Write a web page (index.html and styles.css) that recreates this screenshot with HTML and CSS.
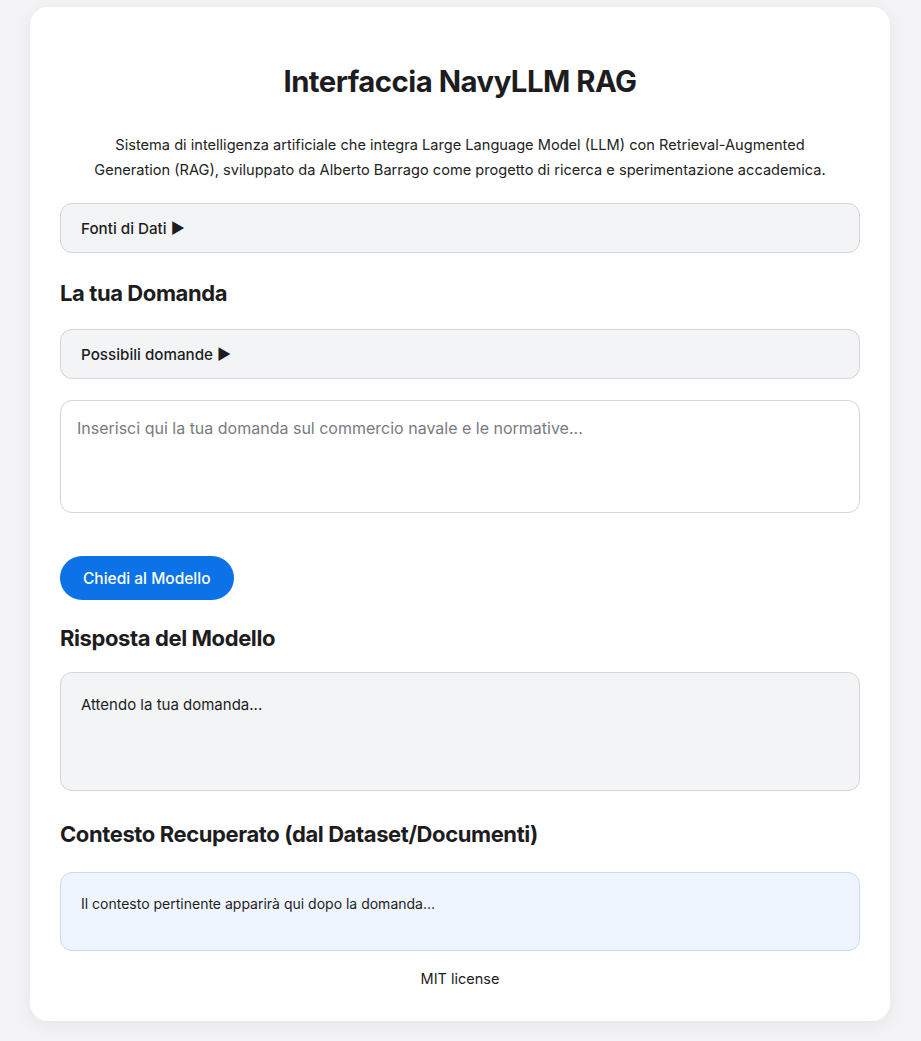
FILE: index.html
```html
<!DOCTYPE html>
<html lang="it">
<head>
<meta charset="utf-8">
<title>Interfaccia NavyLLM RAG</title>
<link rel="stylesheet" href="styles.css">
</head>
<body>
<main class="card">
  <h1 class="title">Interfaccia NavyLLM RAG</h1>
  <p class="desc">Sistema di intelligenza artificiale che integra Large Language Model (LLM) con Retrieval-Augmented Generation (RAG), sviluppato da Alberto Barrago come progetto di ricerca e sperimentazione accademica.</p>
  <div class="details details-sources">Fonti di Dati ▶</div>

  <h2 class="section section-question">La tua Domanda</h2>
  <div class="details">Possibili domande ▶</div>
  <div class="textarea"><span class="placeholder">Inserisci qui la tua domanda sul commercio navale e le normative...</span></div>
  <div class="actions"><button class="btn">Chiedi al Modello</button></div>

  <h2 class="section section-answer">Risposta del Modello</h2>
  <div class="answer">Attendo la tua domanda...</div>

  <h2 class="section section-context">Contesto Recuperato (dal Dataset/Documenti)</h2>
  <div class="context">Il contesto pertinente apparirà qui dopo la domanda...</div>

  <footer class="footer">MIT license</footer>
</main>
</body>
</html>
```

FILE: styles.css
```css
* { box-sizing: border-box; }
html, body { margin: 0; padding: 0; }
body {
  background: #f3f3f5;
  font-family: Inter, "Noto Sans", "Liberation Sans", sans-serif;
  color: #1d1d1f;
  padding: 7px 31px 20px 30px;
}
.card {
  background: #ffffff;
  border-radius: 18px;
  box-shadow: 0 4px 18px rgba(0, 0, 0, 0.06);
  padding: 30px 30px 32px;
}
.title {
  margin: 27px 0 0;
  font-size: 29.3px;
  line-height: 36px;
  font-weight: 700;
  text-align: center;
  letter-spacing: -0.5px;
}
.desc {
  margin: 33px 0 0;
  padding: 0 30px;
  font-size: 14.6px;
  line-height: 25px;
  text-align: center;
  color: #222;
}
.details {
  height: 50px;
  background: #f3f4f6;
  border: 1px solid #d4d4d8;
  border-radius: 12px;
  padding: 0 20px;
  display: flex;
  align-items: center;
  font-size: 15.2px;
  font-weight: 500;
  margin-top: 22px;
}
.details-sources { margin-top: 20px; }
.section {
  margin: 0;
  font-size: 22px;
  line-height: 28px;
  font-weight: 700;
  letter-spacing: -0.4px;
}
.section-question { margin-top: 26px; }
.section-answer { margin-top: 24px; }
.section-context { margin-top: 29px; }
.textarea {
  margin-top: 21px;
  height: 113px;
  border: 1px solid #d4d4d8;
  border-radius: 12px;
  padding: 15px 16px;
  font-size: 16px;
  line-height: 24px;
}
.placeholder { color: #7a7a7e; }
.actions { margin-top: 43px; }
.btn {
  height: 44px;
  padding: 0 23px;
  border: none;
  border-radius: 22px;
  background: #0b72e7;
  color: #fff;
  font-family: inherit;
  font-size: 15.5px;
  font-weight: 500;
}
.answer {
  margin-top: 20px;
  height: 119px;
  background: #f3f4f6;
  border: 1px solid #d4d4d8;
  border-radius: 12px;
  padding: 20px 20px;
  font-size: 15px;
  line-height: 24px;
}
.context {
  margin-top: 24px;
  height: 79px;
  background: #eff5fe;
  border: 1px solid #c6dbf6;
  border-radius: 12px;
  padding: 20px 20px;
  font-size: 14px;
  line-height: 22px;
}
.footer {
  margin-top: 18px;
  text-align: center;
  font-size: 14.5px;
  line-height: 20px;
}
```
